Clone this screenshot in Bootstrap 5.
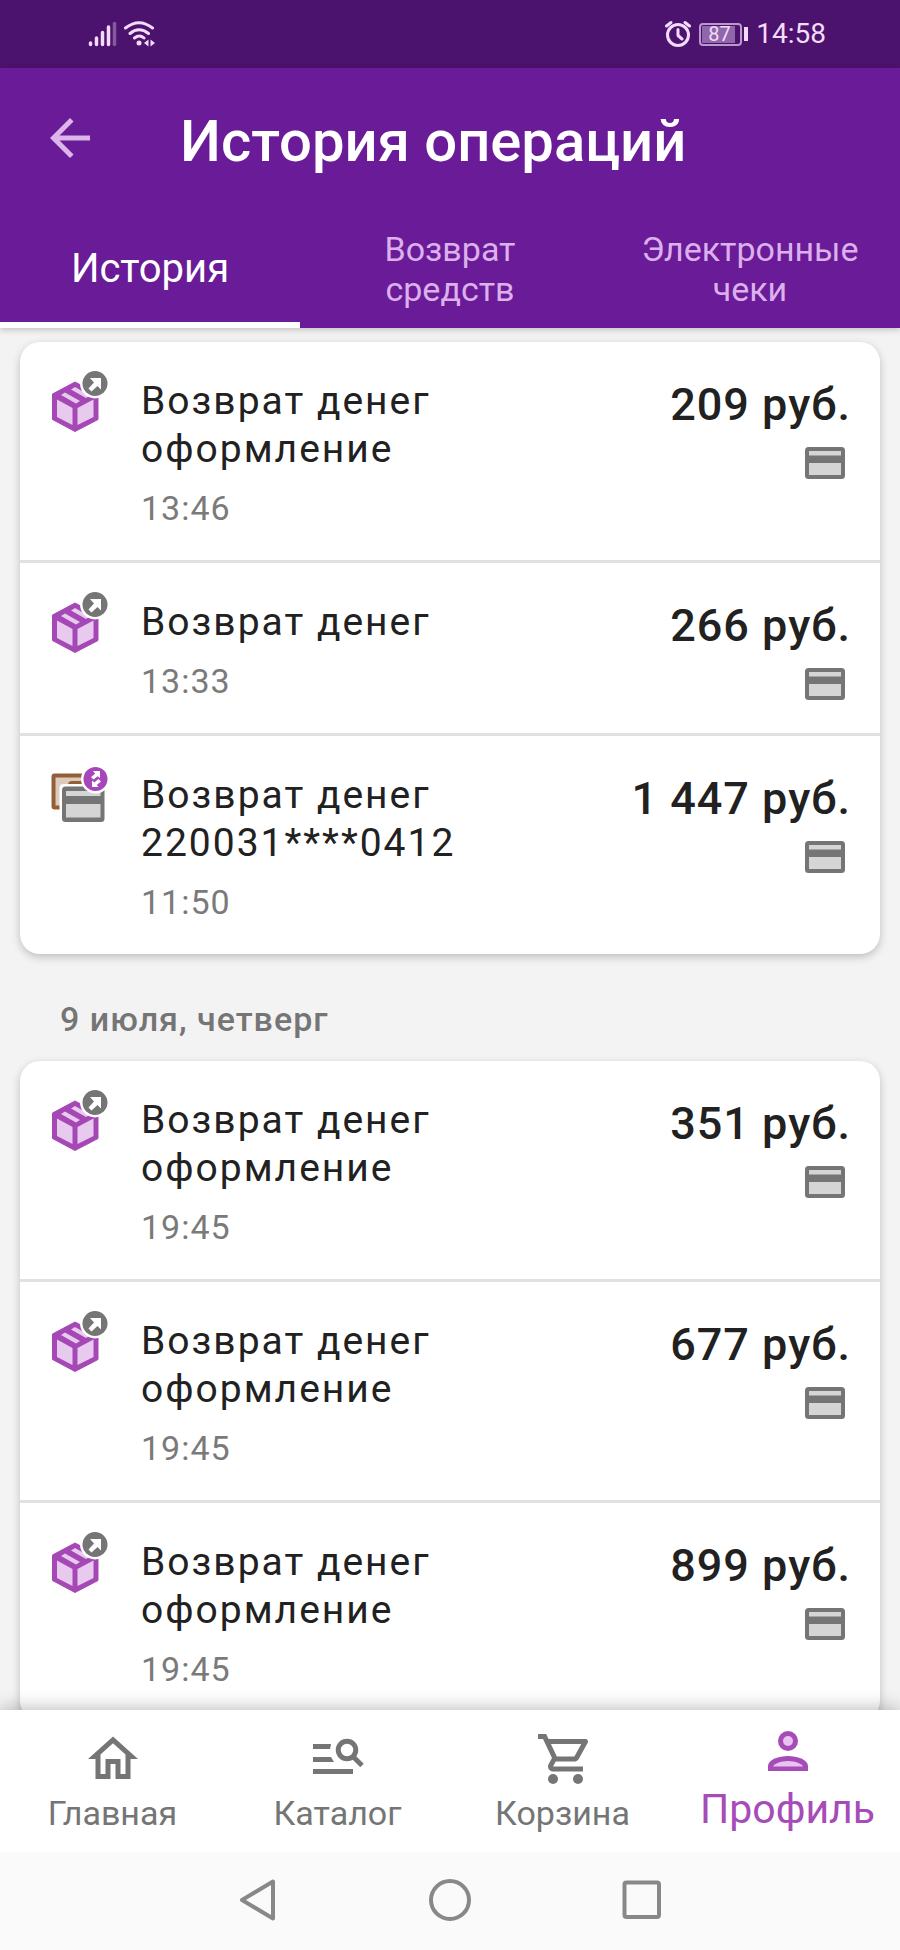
<!DOCTYPE html>
<html lang="ru">
<head>
<meta charset="utf-8">
<meta name="viewport" content="width=device-width, initial-scale=1">
<title>История операций</title>
<link href="https://cdn.jsdelivr.net/npm/bootstrap@5.3.0/dist/css/bootstrap.min.css" rel="stylesheet">
<style>
  body { font-family: Roboto, "Noto Sans", sans-serif; background: #f3f3f3; color: #212121; }
  svg { display: block; flex: none; }

  .status-bar { background: #4b126e; color: #f3dcf9; height: 68px; padding: 0 74px 0 88px; font-size: 28px; line-height: 32px; }
  .battery { width: 43px; height: 23px; border: 2px solid #b99acb; border-radius: 4px; padding: 1px; }
  .battery-level { width: 33px; height: 17px; background: #9067aa; font-size: 20px; line-height: 17px; padding-left: 6px; }
  .battery-cap { width: 4px; height: 14px; margin-left: 2px; background: #f3dcf9; }

  .app-header { background: #691b98; box-shadow: 0 2px 6px rgba(0,0,0,.2); z-index: 1; }
  .title-row { padding: 40px 40px 42px; gap: 80px; }
  .title-row button { color: #dcb5ea; }
  .title-row h1 { font-size: 58px; line-height: 66px; font-weight: 500; }
  .top-tabs a { flex: 1 1 0; height: 112px; border-bottom: 6px solid transparent; color: #dcb0ec; font-size: 34px; line-height: 40px; text-decoration: none; }
  .top-tabs a.active { color: #fff; border-color: #fff; font-size: 40px; line-height: 48px; }

  .feed { padding: 14px 20px 20px; scrollbar-width: none; min-height: 0; }
  .feed::-webkit-scrollbar { display: none; }
  .day-card { border-radius: 20px; box-shadow: 0 3px 8px rgba(0,0,0,.22); }
  .day-title { font-size: 34px; line-height: 40px; font-weight: 500; color: #757575; margin: 45px 40px 22px; letter-spacing: 1px; }
  .operation { padding: 0 29px 32px 30px; gap: 31px; }
  .operation + .operation { border-top: 3px solid #e1e1e1; }
  .op-icon { margin-top: 28px; }
  .op-name { margin-top: 35px; font-size: 39px; line-height: 48px; letter-spacing: 2px; }
  .op-time { margin-top: 15px; font-size: 34px; line-height: 40px; letter-spacing: 1px; color: #7a7a7a; }
  .op-sum { margin-top: 36px; font-size: 45px; line-height: 54px; font-weight: 500; letter-spacing: 1px; }
  .op-card { margin: 15px 6px 0 0; }

  .bottom-nav { background: #fff; box-shadow: 0 -3px 16px rgba(0,0,0,.24); z-index: 1; height: 142px; }
  .bottom-nav a { flex: 1 1 0; padding-bottom: 19px; gap: 4px; color: #757575; font-size: 34px; line-height: 40px; text-decoration: none; }
  .bottom-nav a.active { color: #a64bb8; font-size: 41px; line-height: 48px; }
  .system-nav { background: #fafafa; height: 98px; padding-bottom: 2px; gap: 150px; z-index: 1; }
  .system-nav button { color: #888; }
</style>
</head>
<body>

<svg class="d-none" aria-hidden="true">
  <symbol id="parcel" viewBox="0 0 60 62">
    <path d="M25 12 48 24v25.500L25 61.500 2.500 49.500V24z" fill="#a548b6" stroke="#a548b6" stroke-width="1" stroke-linejoin="round"/>
    <path d="M7 29.500 22.500 38v17L7 47zM43.500 29.500 27.500 38v17l16-8zM11 25l4-2.500L30 31l-4 2.500zM21 19.500l4-2.500L40 25.500l-4 2.500z" fill="#e9caef"/>
    <circle cx="45" cy="13.500" r="15" fill="#fff"/>
    <circle cx="45" cy="13.500" r="12.500" fill="#757575"/>
    <path d="M40 8h11v11.500l-3.500-3.500-6 5.500-3-3 5.500-6z" fill="#fff"/>
  </symbol>
  <symbol id="to-card" viewBox="0 0 60 62">
    <rect x="3.500" y="11.500" width="40" height="32" rx="1" fill="#dccabb" stroke="#925f38" stroke-width="4"/>
    <path d="M18 24v-3q0-4 4-4h14v7z" fill="#925f38"/>
    <path d="M9.500 46V24q0-4 4-4H57v41H13.500q-4 0-4-4z" fill="#fff"/>
    <rect x="12" y="22.500" width="42.500" height="35.500" rx="3.500" fill="#757575"/>
    <path d="M16 27h34.500v5H16zM16 40h34.500v13.500H16z" fill="#d5d5d5"/>
    <circle cx="45.500" cy="15" r="14.500" fill="#fff"/>
    <circle cx="45.500" cy="15" r="12" fill="#a745bb"/>
    <path d="M43 7h7v7l-2.300-1.700-4.200 3.200-2.500-2.500 4.200-3.300zM42 23v-6.500l2.300 2 4.200-3.500 2.500 2.500-4.200 3.500 1.700 2z" fill="#fff"/>
  </symbol>
  <symbol id="bank-card" viewBox="0 0 40 32">
    <rect width="40" height="32" rx="3.500" fill="#757575"/>
    <path d="M4 4h32v4.500H4zM4 16h32v12H4z" fill="#d5d5d5"/>
  </symbol>
</svg>

<div class="d-flex flex-column vh-100 overflow-hidden">

  <div class="status-bar d-flex align-items-center flex-shrink-0">
    <svg width="30" height="26" viewBox="0 0 30 26" stroke="currentColor" stroke-width="3.500" stroke-linecap="round">
      <path d="M2.500 22v1.500M8.500 17v6.500M14.500 11.500v12M20.500 6v17.500"/><path d="M26.500 2.500v21" opacity=".35"/>
    </svg>
    <svg class="ms-1" width="36" height="28" viewBox="-2 0 36 28" fill="none" stroke="currentColor" stroke-width="3" stroke-linecap="round">
      <path d="M1.500 8q13.500-10.500 27 0M6 13.500q9-7.500 18.500 0M10.500 18q5-4 9.500 0"/>
      <circle cx="15" cy="23" r="2.500" fill="currentColor" stroke="none"/>
      <path d="M20 23l4.500-3.500v7zM31 23l-4.500-3.500v7z" fill="currentColor" stroke="none"/>
    </svg>
    <svg class="ms-auto" width="26" height="28" viewBox="0 0 26 28" fill="none" stroke="currentColor" stroke-width="3" stroke-linecap="round" stroke-linejoin="round">
      <circle cx="13" cy="15" r="10.500"/><path d="M13 9.500v6l4 3.500M1.500 6 6 2.500M24.500 6 20 2.500"/>
    </svg>
    <div class="battery ms-2 me-0"><div class="battery-level">87</div></div>
    <div class="battery-cap"></div>
    <time class="ms-2">14:58</time>
  </div>

  <header class="app-header flex-shrink-0">
    <div class="title-row d-flex align-items-start">
      <button type="button" class="border-0 bg-transparent p-0" aria-label="Назад">
        <svg width="60" height="60" viewBox="0 0 24 24" fill="currentColor"><path d="M20 11H7.830l5.590-5.590L12 4l-8 8 8 8 1.410-1.410L7.830 13H20z"/></svg>
      </button>
      <h1 class="m-0 text-white">История операций</h1>
    </div>
    <nav class="top-tabs d-flex text-center">
      <a href="#" class="active d-flex align-items-center justify-content-center" aria-current="page">История</a>
      <a href="#" class="d-flex align-items-center justify-content-center">Возврат<br>средств</a>
      <a href="#" class="d-flex align-items-center justify-content-center">Электронные<br>чеки</a>
    </nav>
  </header>

  <main class="feed flex-grow-1 overflow-auto">
    <section class="day-card bg-white">
      <article class="operation d-flex align-items-start">
        <svg class="op-icon" width="60" height="62"><use href="#parcel"/></svg>
        <div class="flex-grow-1">
          <div class="op-name">Возврат денег<br>оформление</div>
          <div class="op-time">13:46</div>
        </div>
        <div class="d-flex flex-column align-items-end text-nowrap">
          <div class="op-sum">209 руб.</div>
          <svg class="op-card" width="40" height="32"><use href="#bank-card"/></svg>
        </div>
      </article>
      <article class="operation d-flex align-items-start">
        <svg class="op-icon" width="60" height="62"><use href="#parcel"/></svg>
        <div class="flex-grow-1">
          <div class="op-name">Возврат денег</div>
          <div class="op-time">13:33</div>
        </div>
        <div class="d-flex flex-column align-items-end text-nowrap">
          <div class="op-sum">266 руб.</div>
          <svg class="op-card" width="40" height="32"><use href="#bank-card"/></svg>
        </div>
      </article>
      <article class="operation d-flex align-items-start">
        <svg class="op-icon" width="60" height="62"><use href="#to-card"/></svg>
        <div class="flex-grow-1">
          <div class="op-name">Возврат денег<br>220031****0412</div>
          <div class="op-time">11:50</div>
        </div>
        <div class="d-flex flex-column align-items-end text-nowrap">
          <div class="op-sum">1 447 руб.</div>
          <svg class="op-card" width="40" height="32"><use href="#bank-card"/></svg>
        </div>
      </article>
    </section>

    <h2 class="day-title">9 июля, четверг</h2>

    <section class="day-card bg-white">
      <article class="operation d-flex align-items-start">
        <svg class="op-icon" width="60" height="62"><use href="#parcel"/></svg>
        <div class="flex-grow-1">
          <div class="op-name">Возврат денег<br>оформление</div>
          <div class="op-time">19:45</div>
        </div>
        <div class="d-flex flex-column align-items-end text-nowrap">
          <div class="op-sum">351 руб.</div>
          <svg class="op-card" width="40" height="32"><use href="#bank-card"/></svg>
        </div>
      </article>
      <article class="operation d-flex align-items-start">
        <svg class="op-icon" width="60" height="62"><use href="#parcel"/></svg>
        <div class="flex-grow-1">
          <div class="op-name">Возврат денег<br>оформление</div>
          <div class="op-time">19:45</div>
        </div>
        <div class="d-flex flex-column align-items-end text-nowrap">
          <div class="op-sum">677 руб.</div>
          <svg class="op-card" width="40" height="32"><use href="#bank-card"/></svg>
        </div>
      </article>
      <article class="operation d-flex align-items-start">
        <svg class="op-icon" width="60" height="62"><use href="#parcel"/></svg>
        <div class="flex-grow-1">
          <div class="op-name">Возврат денег<br>оформление</div>
          <div class="op-time">19:45</div>
        </div>
        <div class="d-flex flex-column align-items-end text-nowrap">
          <div class="op-sum">899 руб.</div>
          <svg class="op-card" width="40" height="32"><use href="#bank-card"/></svg>
        </div>
      </article>
    </section>
  </main>

  <nav class="bottom-nav d-flex flex-shrink-0">
    <a href="#" class="d-flex flex-column align-items-center justify-content-end">
      <svg width="60" height="60" viewBox="0 0 24 24" fill="currentColor"><path d="M12 5.690l5 4.500V18h-2v-6H9v6H7v-7.810l5-4.500M12 3L2 12h3v8h6v-6h2v6h6v-8h3L12 3z"/></svg>
      Главная
    </a>
    <a href="#" class="d-flex flex-column align-items-center justify-content-end">
      <svg width="60" height="60" viewBox="0 0 60 60" fill="currentColor"><path d="M5 15h18l-1 5H5zM5 28h18l3 5H5zM5 40h40v5H5z"/><g fill="none" stroke="currentColor" stroke-width="5"><circle cx="39" cy="21" r="8.750"/><path d="M44.500 27 54 36.500"/></g></svg>
      Каталог
    </a>
    <a href="#" class="d-flex flex-column align-items-center justify-content-end">
      <svg width="60" height="60" viewBox="-1 0 24 24" fill="currentColor"><path d="M15.550 13c.75 0 1.410-.41 1.750-1.030l3.580-6.490A.996.996 0 0 0 20.010 4H5.210l-.94-2H1v2h2l3.600 7.590-1.350 2.440C4.520 15.370 5.480 17 7 17h12v-2H7l1.100-2h7.450zM6.160 6h12.150l-2.760 5H8.530L6.160 6z"/><circle cx="7" cy="20" r="2"/><circle cx="17" cy="20" r="2"/></svg>
      Корзина
    </a>
    <a href="#" class="active d-flex flex-column align-items-center justify-content-end" aria-current="page">
      <svg width="60" height="60" viewBox="0 0 24 24" fill="currentColor"><circle cx="12" cy="8" r="4"/><circle cx="12" cy="8" r="2" fill="#e9c4ee"/><path d="M4 20v-2c0-2.660 4.500-4 8-4s8 1.340 8 4v2z"/><path d="M6 18.200c.4-1 3-2.200 6-2.200s5.600 1.200 6 2.200z" fill="#e9c4ee"/></svg>
      Профиль
    </a>
  </nav>

  <div class="system-nav d-flex align-items-center justify-content-center flex-shrink-0">
    <button type="button" class="border-0 bg-transparent p-0" aria-label="Назад">
      <svg width="42" height="42" viewBox="0 0 42 42" fill="none" stroke="currentColor" stroke-width="4" stroke-linejoin="round"><path d="M36 2.500v37L5 21z"/></svg>
    </button>
    <button type="button" class="border-0 bg-transparent p-0" aria-label="Домой">
      <svg width="42" height="42" viewBox="0 0 42 42" fill="none" stroke="currentColor" stroke-width="4"><circle cx="21" cy="21" r="19"/></svg>
    </button>
    <button type="button" class="border-0 bg-transparent p-0" aria-label="Недавние">
      <svg width="42" height="42" viewBox="0 0 42 42" fill="none" stroke="currentColor" stroke-width="4"><rect x="3.500" y="3.500" width="34.500" height="34.500" rx="2"/></svg>
    </button>
  </div>
</div>

<script src="https://cdn.jsdelivr.net/npm/bootstrap@5.3.0/dist/js/bootstrap.bundle.min.js"></script>
</body>
</html>
